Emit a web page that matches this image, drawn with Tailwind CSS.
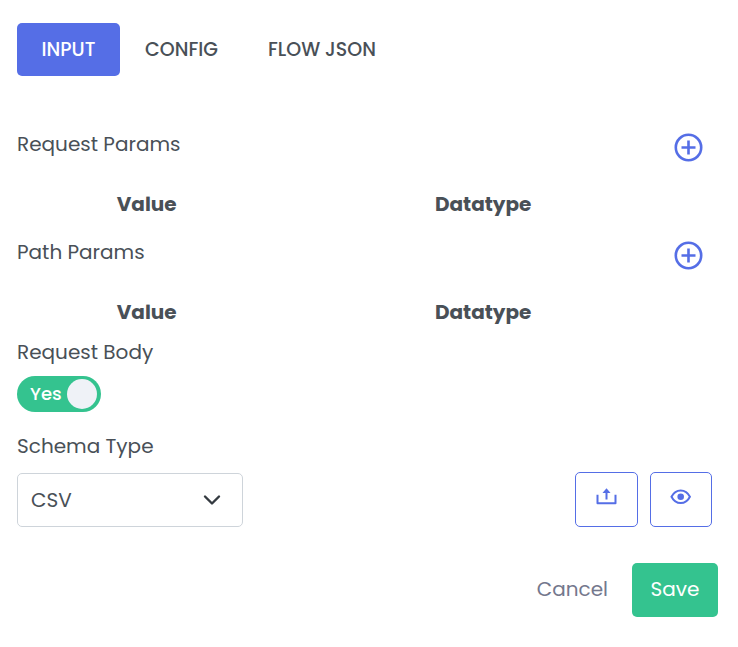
<!DOCTYPE html>
<html lang="en">
<head>
<meta charset="utf-8">
<meta name="viewport" content="width=device-width, initial-scale=1">
<title>Request input</title>
<script src="https://cdn.jsdelivr.net/npm/@tailwindcss/browser@4"></script>
</head>
<body class="bg-white font-[Poppins,Inter,sans-serif] text-xl leading-8 text-[#495057]">
<main class="pt-[23px] pr-5 pb-[30px] pl-[17px]">
  <nav class="flex text-[19px] font-medium" role="tablist">
    <button role="tab" aria-selected="true" class="h-[53px] min-w-[103px] rounded-[5px] bg-[#556ee6] text-white">INPUT</button>
    <button role="tab" aria-selected="false" class="h-[53px] min-w-[123px]">CONFIG</button>
    <button role="tab" aria-selected="false" class="h-[53px] min-w-[158px]">FLOW JSON</button>
  </nav>

  <section class="mt-[52px]">
    <div class="flex h-[46px] items-start justify-between pr-[13px]">
      <h2>Request Params</h2>
      <button aria-label="Add request param" class="mt-1 text-[#556ee6]">
        <svg class="size-8" viewBox="0 0 32 32" fill="none" stroke="currentColor" stroke-width="2.6"><circle cx="15.500" cy="15.500" r="12.700"/><path d="M15.500 8.500v14M8.500 15.500h14"/></svg>
      </button>
    </div>
    <table class="w-full table-fixed">
      <thead><tr><th scope="col" class="h-[62px] w-[37%] pb-0.5 font-bold">Value</th><th scope="col" class="w-[59%] pb-0.5 font-bold">Datatype</th><td></td></tr></thead>
    </table>
  </section>

  <section>
    <div class="flex h-[46px] items-start justify-between pr-[13px]">
      <h2>Path Params</h2>
      <button aria-label="Add path param" class="mt-1 text-[#556ee6]">
        <svg class="size-8" viewBox="0 0 32 32" fill="none" stroke="currentColor" stroke-width="2.6"><circle cx="15.500" cy="15.500" r="12.700"/><path d="M15.500 8.500v14M8.500 15.500h14"/></svg>
      </button>
    </div>
    <table class="w-full table-fixed">
      <thead><tr><th scope="col" class="h-[62px] w-[37%] pb-0.5 font-bold">Value</th><th scope="col" class="w-[59%] pb-0.5 font-bold">Datatype</th><td></td></tr></thead>
    </table>
  </section>

  <label for="body" class="-mt-2 block w-fit">Request Body</label>
  <label class="mt-2 flex h-9 w-[84px] items-center justify-between rounded-full bg-[#34c38f] pr-1 pl-[13px] text-lg font-medium text-white">
    <input id="body" type="checkbox" role="switch" checked class="sr-only">
    <span>Yes</span>
    <span class="size-[30px] rounded-full bg-[#eff2f7]"></span>
  </label>

  <label for="schema" class="mt-[18px] block w-fit">Schema Type</label>
  <div class="mt-2.5 flex items-center justify-between pr-1.5">
    <div class="grid w-[226px] items-center">
      <select id="schema" class="col-start-1 row-start-1 h-[54px] w-full appearance-none rounded-[5px] border border-[#ced4da] bg-white px-[13px]">
        <option selected>CSV</option>
        <option>JSON</option>
        <option>XML</option>
      </select>
      <svg class="pointer-events-none col-start-1 row-start-1 mr-5 size-5 justify-self-end text-[#343a40]" viewBox="0 0 20 20" fill="none" stroke="currentColor" stroke-width="2.4" stroke-linecap="round" stroke-linejoin="round"><path d="M2 6.500l7 7 7-7"/></svg>
    </div>
    <div class="flex gap-3 text-[#556ee6]">
      <button aria-label="Upload schema" class="flex h-[55px] w-[63px] items-center justify-center rounded-[5px] border border-[#556ee6] pb-1.5">
        <svg class="size-6" viewBox="0 0 24 24" fill="none" stroke="currentColor" stroke-width="2" stroke-linejoin="round"><path d="M2.500 9.800v8.500h18v-8.500M11.500 14.500V6"/><path d="M11.500 3.200l4 4.800h-8z" fill="currentColor" stroke="none"/></svg>
      </button>
      <button aria-label="Preview schema" class="flex h-[55px] w-[62px] items-center justify-center rounded-[5px] border border-[#556ee6] pb-1.5">
        <svg class="size-6" viewBox="0 0 24 24" fill="none" stroke="currentColor" stroke-width="2"><path d="M2.500 11.700c2-4 5.200-6.300 9.200-6.300s7.200 2.300 9.200 6.300c-2 4-5.200 6.300-9.200 6.300s-7.200-2.300-9.200-6.300z"/><circle cx="11.700" cy="11.700" r="3.300" fill="currentColor" stroke="none"/></svg>
      </button>
    </div>
  </div>

  <div class="mt-9 flex items-center justify-end">
    <button class="h-[54px] px-6 pb-0.5 text-[#74788d]">Cancel</button>
    <button class="h-[54px] w-[86px] rounded-[5px] bg-[#34c38f] pb-0.5 text-white">Save</button>
  </div>
</main>
</body>
</html>
